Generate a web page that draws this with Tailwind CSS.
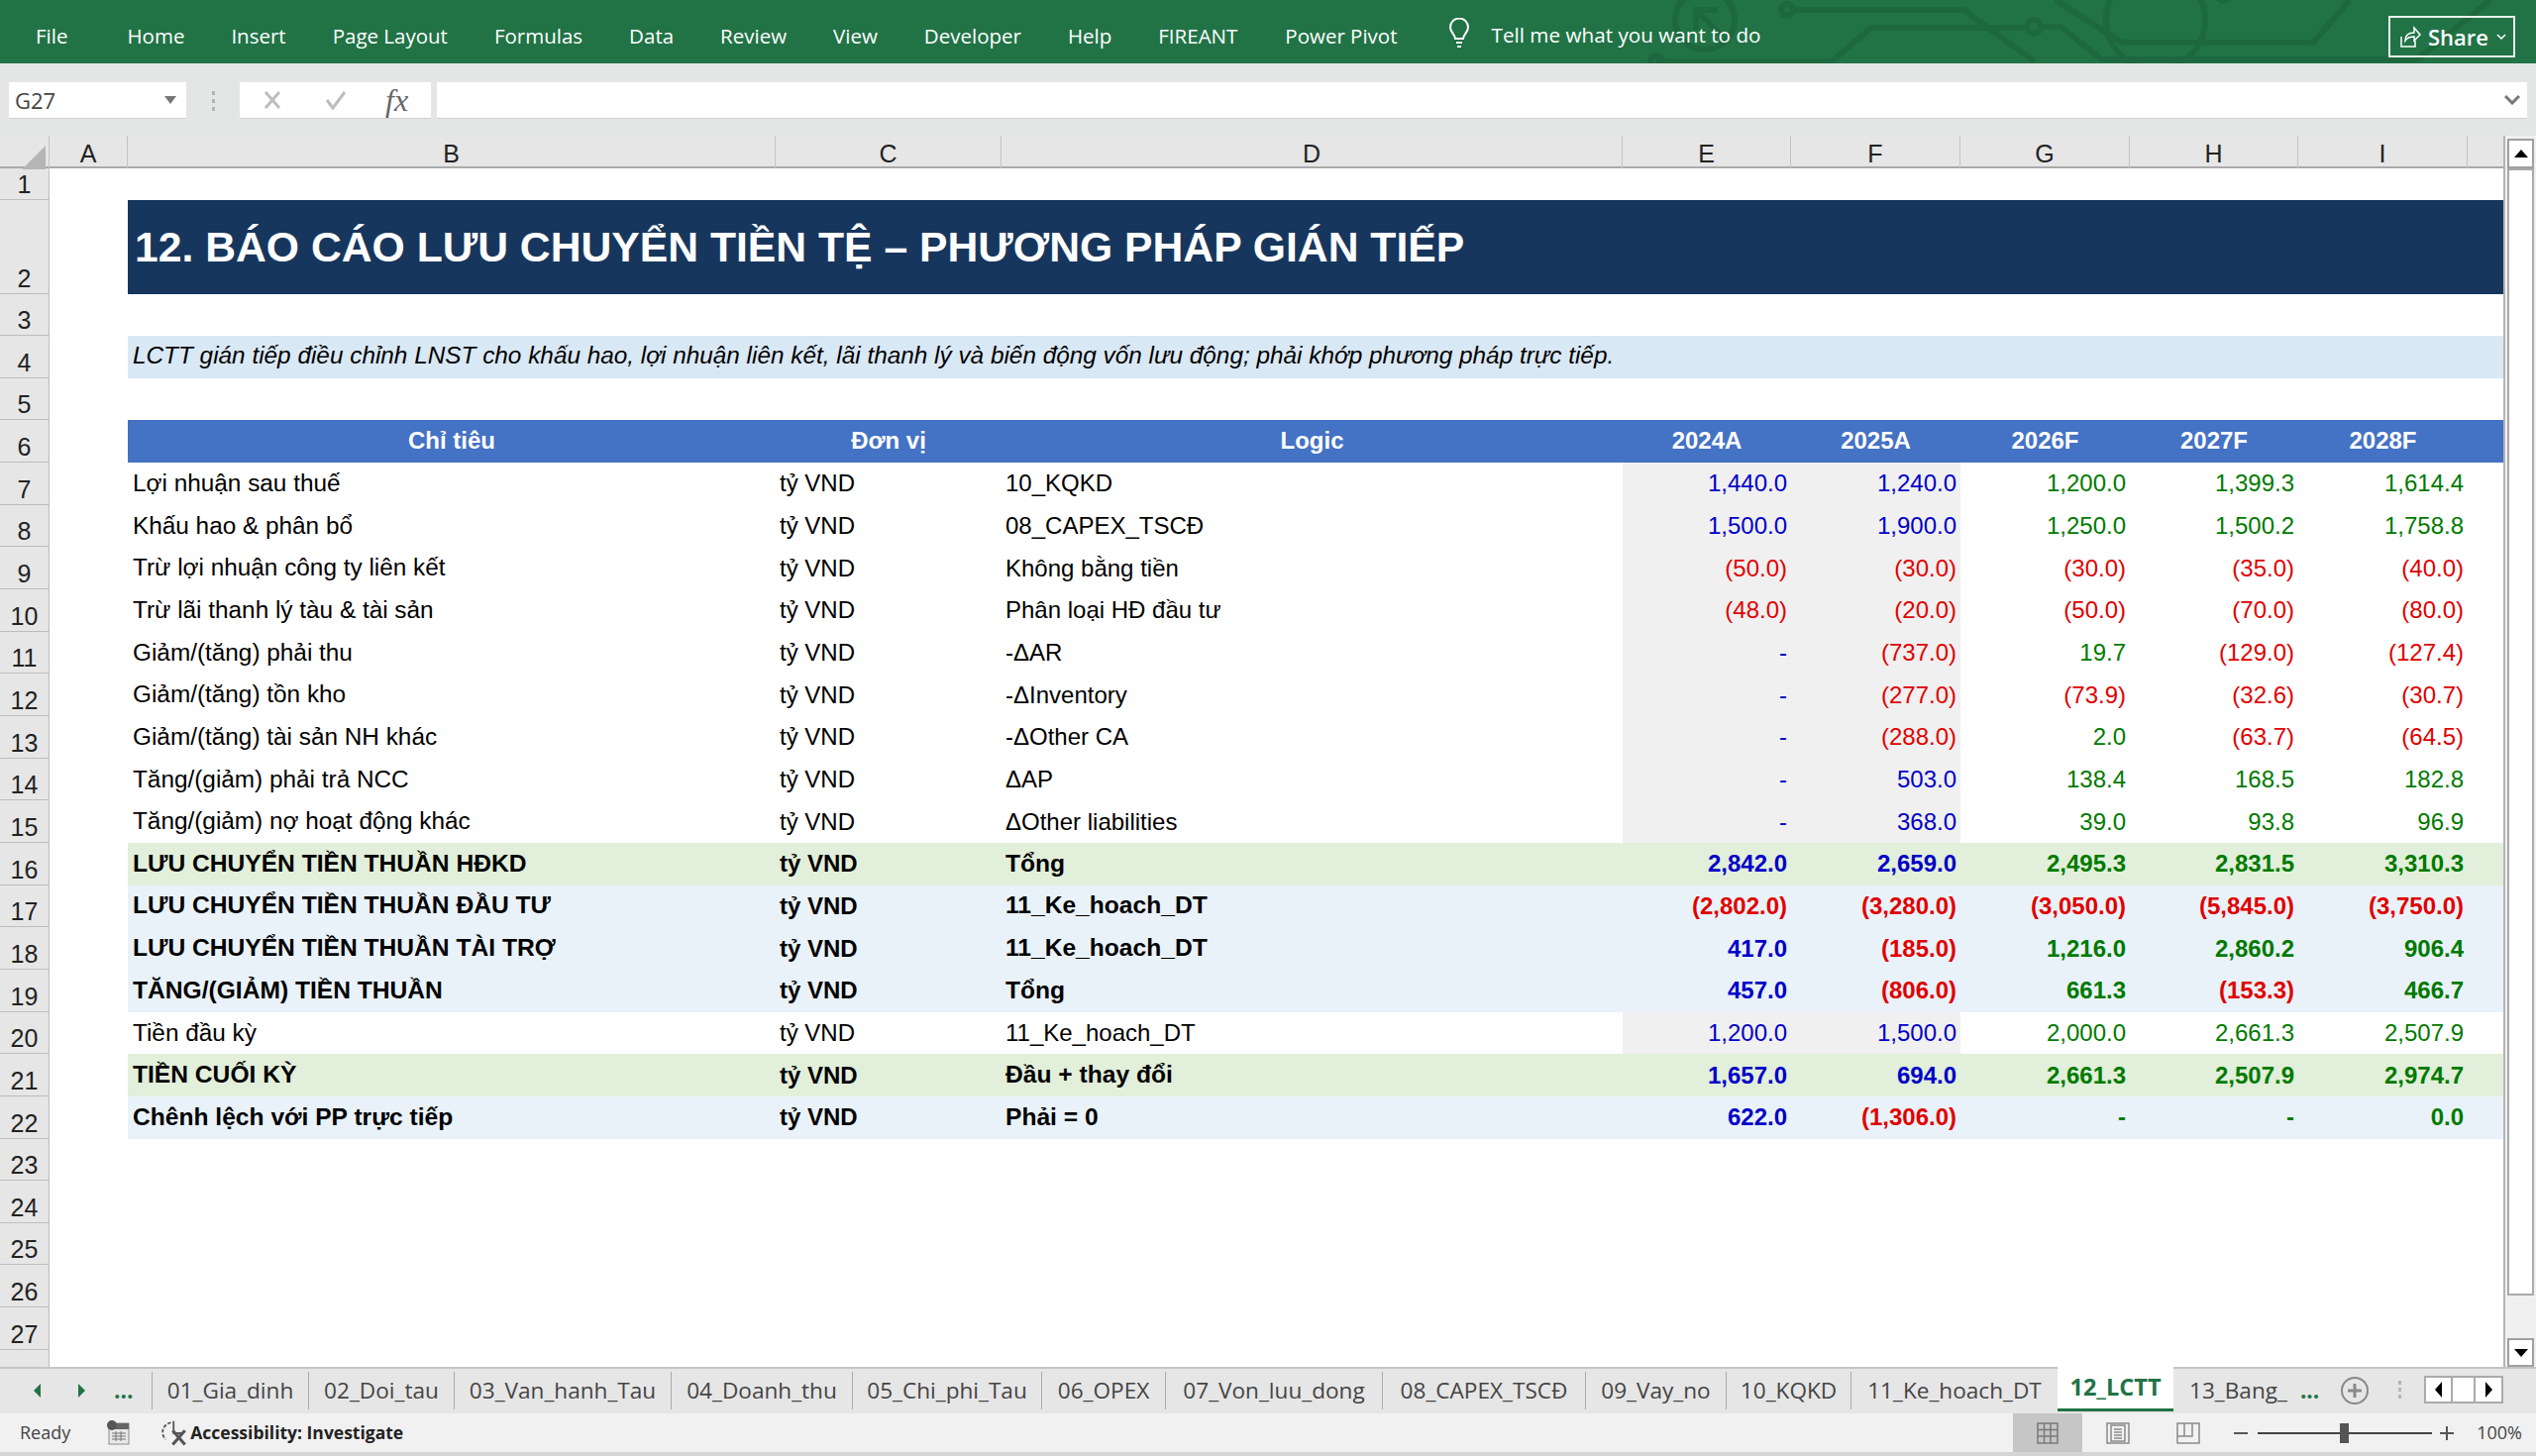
<!DOCTYPE html>
<html lang="vi">
<head>
  <meta charset="UTF-8" />
  <title>12_LCTT - Excel</title>
  <script src="https://cdn.jsdelivr.net/npm/@tailwindcss/browser@4"></script>
</head>
<body class="bg-[#e6e6e6] font-['Open_Sans',sans-serif]">
  <div class="w-[2560px] h-[1470px] overflow-hidden flex flex-col">

    <!-- ribbon tabs -->
    <div class="relative h-[64px] shrink-0 bg-[#217346] text-white text-[20.5px] flex items-center pt-[8px] pl-[36px]">
      <svg class="absolute left-0 top-0" width="2560" height="64" fill="none" stroke="#1e683f" stroke-width="6">
        <circle cx="1721" cy="20" r="30" />
        <path d="M1714 12 L1738 36 M1712 30 V10 H1734" />
        <circle cx="1804" cy="10" r="6" />
        <path d="M1810 10 H1982 L2054 62" />
        <path d="M1672 62 H1849 L1889 28 H2045" />
        <circle cx="1672" cy="62" r="6" />
        <circle cx="2053" cy="27" r="7" />
        <path d="M2060 27 H2080 L2122 60 H2440 L2514 0" />
        <path d="M2075 0 L2142 43 H2335 L2372 0" />
        <circle cx="2176" cy="20" r="50" />
        <circle cx="2244" cy="-4" r="8" fill="#1e683f" stroke="none" />
      </svg>
      <div class="relative flex items-center gap-[47px]">
        <span class="mr-[13px]">File</span>
        <span>Home</span>
        <span>Insert</span>
        <span>Page Layout</span>
        <span>Formulas</span>
        <span>Data</span>
        <span>Review</span>
        <span>View</span>
        <span>Developer</span>
        <span>Help</span>
        <span class="mr-[1px]">FIREANT</span>
        <span>Power Pivot</span>
      </div>
      <svg class="relative ml-[51px] -mt-[4px]" width="24" height="32" viewBox="0 0 24 32" fill="none" stroke="#fff" stroke-width="2">
        <path d="M8 21c0-4-5-6-5-11.500a9 9 0 0 1 18 0C21 15 16 17 16 21Z" />
        <path d="M9 25h6M10 29h4" />
      </svg>
      <span class="relative ml-[20px] text-[20.7px]">Tell me what you want to do</span>
      <div class="absolute left-[2411px] top-[16px] w-[128px] h-[42px] border-2 border-white/90 flex items-center pl-[9px] gap-[7px] text-[22px] font-semibold">
        <svg width="22" height="24" viewBox="0 0 22 24" fill="none" stroke="#fff" stroke-width="1.500">
          <path d="M2 12v10h14v-6" />
          <path d="M6 16c0-5 3-8 9-8V3l6 7-6 6v-4c-4 0-7 1-9 4Z" />
        </svg>
        <span>Share</span>
        <svg class="ml-[1px]" width="10" height="6" viewBox="0 0 10 6" fill="none" stroke="#fff" stroke-width="1.500"><path d="M1 1l4 4 4-4" /></svg>
      </div>
    </div>

    <!-- formula bar -->
    <div class="h-[73px] shrink-0 bg-[#e4e6e6] flex items-start pt-[19px] pl-[9px]">
      <div class="w-[179px] h-[37px] bg-white border-b border-[#d0d0d0] flex items-center justify-between pl-[6px] pr-[10px] text-[22px] text-[#444]">
        <span>G27</span>
        <span class="w-0 h-0 border-x-[6px] border-x-transparent border-t-[8px] border-t-[#777]"></span>
      </div>
      <div class="w-[54px] h-[37px] flex flex-col items-center justify-center gap-[4px]">
        <span class="w-[3px] h-[4px] bg-[#b5b5b5]"></span>
        <span class="w-[3px] h-[4px] bg-[#b5b5b5]"></span>
        <span class="w-[3px] h-[4px] bg-[#b5b5b5]"></span>
      </div>
      <div class="w-[193px] h-[37px] bg-white border-b border-[#d0d0d0] relative flex items-center">
        <svg class="ml-[23px]" width="20" height="20" viewBox="0 0 20 20" stroke="#bdbdbd" stroke-width="3" fill="none"><path d="M3 2l14 16M17 2L3 18" /></svg>
        <svg class="ml-[42px]" width="24" height="20" viewBox="0 0 24 20" stroke="#bdbdbd" stroke-width="3" fill="none"><path d="M3 10l6 8L21 2" /></svg>
        <span class="ml-[38px] text-[32px] italic font-['Liberation_Serif',serif] text-[#666] leading-none">fx</span>
      </div>
      <div class="ml-[6px] w-[2110px] h-[37px] bg-white border-b border-[#d0d0d0] flex items-center justify-end pr-[7px]">
        <svg width="16" height="10" viewBox="0 0 16 10" fill="none" stroke="#777" stroke-width="3"><path d="M1 1l7 7 7-7" /></svg>
      </div>
    </div>

    <!-- column letters + sheet -->
    <div class="flex h-[1243px] shrink-0">
      <div class="w-[2527px] flex flex-col font-['Liberation_Sans',sans-serif] text-[24px] text-black">
        <div class="h-[33px] shrink-0 grid grid-cols-[50px_79px_654px_228px_627px_170px_171px_171px_170px_171px_36px] bg-[#e6e6e6] border-b-2 border-[#a9a9a9] text-[25px] leading-[37px] text-center text-[#222]">
          <div class="relative border-r border-[#c4c4c4]">
            <span class="absolute right-[3px] bottom-[3px] w-0 h-0 border-l-[24px] border-l-transparent border-b-[24px] border-b-[#b5b5b5]"></span>
          </div>
          <div class="border-r border-[#c4c4c4]">A</div>
          <div class="border-r border-[#c4c4c4]">B</div>
          <div class="border-r border-[#c4c4c4]">C</div>
          <div class="border-r border-[#c4c4c4]">D</div>
          <div class="border-r border-[#c4c4c4]">E</div>
          <div class="border-r border-[#c4c4c4]">F</div>
          <div class="border-r border-[#c4c4c4]">G</div>
          <div class="border-r border-[#c4c4c4]">H</div>
          <div class="border-r border-[#c4c4c4]">I</div>
          <div></div>
        </div>
        <div id="sheet" class="flex-1 bg-white overflow-hidden"></div>
      </div>
      <!-- vertical scrollbar -->
      <div class="w-[33px] pl-[2px] pr-[2px] border-l-2 border-[#b5b5b5] bg-[#f0f0f0] flex flex-col">
        <div class="h-[30px] mt-[3px] bg-white border-2 border-[#9f9f9f] flex items-center justify-center">
          <span class="w-0 h-0 border-x-[7px] border-x-transparent border-b-[8px] border-b-black"></span>
        </div>
        <div class="h-[1138px] bg-white border-2 border-[#a9a9a9]"></div>
        <div class="flex-1"></div>
        <div class="h-[29px] bg-white border-2 border-[#9f9f9f] flex items-center justify-center">
          <span class="w-0 h-0 border-x-[7px] border-x-transparent border-t-[8px] border-t-black"></span>
        </div>
      </div>
    </div>

    <!-- sheet tabs -->
    <div class="h-[47px] shrink-0 border-t-2 border-[#c4c4c4] bg-[#e6e6e6] flex items-start text-[22.6px] text-[#444] relative">
      <div class="w-[153px] h-[38px] mt-[3px] flex items-center pl-[34px] text-[#217346]">
        <span class="w-0 h-0 border-y-[7px] border-y-transparent border-r-[7px] border-r-[#217346]"></span>
        <span class="ml-[38px] w-0 h-0 border-y-[7px] border-y-transparent border-l-[7px] border-l-[#217346]"></span>
        <span class="ml-[29px] font-bold">...</span>
      </div>
      <div class="w-[158px] h-[38px] mt-[3px] border-l border-[#ababab] flex items-center justify-center leading-none">01_Gia_dinh</div>
      <div class="w-[147px] h-[38px] mt-[3px] border-l border-[#ababab] flex items-center justify-center leading-none">02_Doi_tau</div>
      <div class="w-[219px] h-[38px] mt-[3px] border-l border-[#ababab] flex items-center justify-center leading-none">03_Van_hanh_Tau</div>
      <div class="w-[183px] h-[38px] mt-[3px] border-l border-[#ababab] flex items-center justify-center leading-none">04_Doanh_thu</div>
      <div class="w-[191px] h-[38px] mt-[3px] border-l border-[#ababab] flex items-center justify-center leading-none">05_Chi_phi_Tau</div>
      <div class="w-[125px] h-[38px] mt-[3px] border-l border-[#ababab] flex items-center justify-center leading-none">06_OPEX</div>
      <div class="w-[219px] h-[38px] mt-[3px] border-l border-[#ababab] flex items-center justify-center leading-none">07_Von_luu_dong</div>
      <div class="w-[205px] h-[38px] mt-[3px] border-l border-[#ababab] flex items-center justify-center leading-none">08_CAPEX_TSCĐ</div>
      <div class="w-[142px] h-[38px] mt-[3px] border-l border-[#ababab] flex items-center justify-center leading-none">09_Vay_no</div>
      <div class="w-[126px] h-[38px] mt-[3px] border-l border-[#ababab] flex items-center justify-center leading-none">10_KQKD</div>
      <div class="w-[209px] h-[38px] mt-[3px] border-l border-[#ababab] flex items-center justify-center leading-none">11_Ke_hoach_DT</div>
      <div class="w-[117px] h-[45px] -mt-[2px] bg-white border-b-[3px] border-[#217346] flex items-center justify-center font-bold text-[#217346] text-[23.5px] leading-none">12_LCTT</div>
      <div class="h-[38px] mt-[3px] pl-[16px] flex items-center leading-none">13_Bang_<span class="ml-[13px] font-bold text-[#217346]">...</span></div>
      <svg class="ml-[21px] mt-[7px]" width="30" height="30" viewBox="0 0 30 30" fill="none" stroke="#8a8a8a" stroke-width="2"><circle cx="15" cy="15" r="13" /><path d="M15 8v14M8 15h14" stroke-width="3" /></svg>
      <div class="ml-[29px] mt-[12px] flex flex-col gap-[3px]">
        <span class="w-[3px] h-[4px] bg-[#b5b5b5]"></span>
        <span class="w-[3px] h-[4px] bg-[#b5b5b5]"></span>
        <span class="w-[3px] h-[4px] bg-[#b5b5b5]"></span>
      </div>
      <div class="ml-[23px] mt-[7px] w-[80px] h-[28px] bg-white border-2 border-[#ababab] flex">
        <div class="w-[27px] border-r-2 border-[#ababab] flex items-center justify-center"><span class="w-0 h-0 border-y-[8px] border-y-transparent border-r-[7px] border-r-black"></span></div>
        <div class="w-[23px] border-r-2 border-[#ababab]"></div>
        <div class="flex-1 flex items-center justify-center"><span class="w-0 h-0 border-y-[8px] border-y-transparent border-l-[7px] border-l-black"></span></div>
      </div>
    </div>

    <!-- status bar -->
    <div class="h-[39px] shrink-0 bg-[#f1f1f1] flex items-center text-[18px] text-[#444]">
      <span class="ml-[20px]">Ready</span>
      <svg class="ml-[36px]" width="24" height="26" viewBox="0 0 24 26">
        <rect x="3" y="3" width="20" height="21" fill="#e8e8e8" stroke="#8c8c8c" />
        <rect x="3" y="3" width="20" height="6" fill="#666" />
        <circle cx="6" cy="5" r="5" fill="#555" />
        <path d="M6 13h14M6 16h14M6 19h14M10 11v10M15 11v10" stroke="#777" stroke-width="1" />
      </svg>
      <svg class="ml-[31px]" width="30" height="30" viewBox="0 0 34 30" fill="none" stroke="#555">
        <path d="M12 3a11 11 0 0 0 -6 19" stroke-dasharray="4 2" stroke-width="2" />
        <path d="M15 1v14h10" stroke-width="2" />
        <path d="M14 12l14 16M28 12L14 28" stroke-width="3.500" />
      </svg>
      <span class="font-bold text-[#222] text-[17.5px]">Accessibility: Investigate</span>

      <div class="ml-auto h-full w-[70px] bg-[#c6c6c6] flex items-center justify-center">
        <svg width="22" height="22" viewBox="0 0 22 22" fill="none" stroke="#7a7a7a" stroke-width="1.500"><rect x="1" y="1" width="20" height="20" /><path d="M1 7.500h20M1 14h20M7.500 1v20M14 1v20" /></svg>
      </div>
      <svg class="ml-[24px]" width="24" height="22" viewBox="0 0 24 22" fill="none" stroke="#8a8a8a" stroke-width="1.500"><rect x="1" y="1" width="22" height="20" /><rect x="5" y="3" width="14" height="16" /><path d="M8 7h8M8 10h8M8 13h8M8 16h8" /></svg>
      <svg class="ml-[47px]" width="24" height="22" viewBox="0 0 24 22" fill="none" stroke="#8a8a8a" stroke-width="1.500"><rect x="1" y="1" width="22" height="20" /><path d="M1 14h15V1M8 1v13" /></svg>
      <span class="ml-[34px] w-[14px] h-[2px] bg-[#555]"></span>
      <div class="relative ml-[10px] w-[176px] h-[2px] bg-[#444]">
        <span class="absolute left-[83px] top-[-9px] w-[9px] h-[20px] bg-[#555]"></span>
      </div>
      <span class="relative ml-[8px] w-[14px] h-[14px]">
        <span class="absolute left-0 top-[6px] w-[14px] h-[2px] bg-[#555]"></span>
        <span class="absolute left-[6px] top-0 w-[2px] h-[14px] bg-[#555]"></span>
      </span>
      <span class="ml-[23px] mr-[14px]">100%</span>
    </div>
    <div class="h-[4px] shrink-0 bg-[#d4d4d4]"></div>
  </div>

  <script>
    const GRID = 'grid grid-cols-[50px_79px_654px_228px_627px_170px_171px_171px_170px_171px_36px]';
    const C = {
      blue: 'text-[#0000c8]', green: 'text-[#007a00]', red: 'text-[#e00000]'
    };
    const RED = v => v.startsWith('(');

    const rows = [
      ['Lợi nhuận sau thuế', '10_KQKD', ['1,440.0', '1,240.0', '1,200.0', '1,399.3', '1,614.4']],
      ['Khấu hao & phân bổ', '08_CAPEX_TSCĐ', ['1,500.0', '1,900.0', '1,250.0', '1,500.2', '1,758.8']],
      ['Trừ lợi nhuận công ty liên kết', 'Không bằng tiền', ['(50.0)', '(30.0)', '(30.0)', '(35.0)', '(40.0)']],
      ['Trừ lãi thanh lý tàu & tài sản', 'Phân loại HĐ đầu tư', ['(48.0)', '(20.0)', '(50.0)', '(70.0)', '(80.0)']],
      ['Giảm/(tăng) phải thu', '-ΔAR', ['-', '(737.0)', '19.7', '(129.0)', '(127.4)']],
      ['Giảm/(tăng) tồn kho', '-ΔInventory', ['-', '(277.0)', '(73.9)', '(32.6)', '(30.7)']],
      ['Giảm/(tăng) tài sản NH khác', '-ΔOther CA', ['-', '(288.0)', '2.0', '(63.7)', '(64.5)']],
      ['Tăng/(giảm) phải trả NCC', 'ΔAP', ['-', '503.0', '138.4', '168.5', '182.8']],
      ['Tăng/(giảm) nợ hoạt động khác', 'ΔOther liabilities', ['-', '368.0', '39.0', '93.8', '96.9']],
      ['LƯU CHUYỂN TIỀN THUẦN HĐKD', 'Tổng', ['2,842.0', '2,659.0', '2,495.3', '2,831.5', '3,310.3'], 'bg-[#e2efda]'],
      ['LƯU CHUYỂN TIỀN THUẦN ĐẦU TƯ', '11_Ke_hoach_DT', ['(2,802.0)', '(3,280.0)', '(3,050.0)', '(5,845.0)', '(3,750.0)'], 'bg-[#e9f2f9]'],
      ['LƯU CHUYỂN TIỀN THUẦN TÀI TRỢ', '11_Ke_hoach_DT', ['417.0', '(185.0)', '1,216.0', '2,860.2', '906.4'], 'bg-[#e9f2f9]'],
      ['TĂNG/(GIẢM) TIỀN THUẦN', 'Tổng', ['457.0', '(806.0)', '661.3', '(153.3)', '466.7'], 'bg-[#e9f2f9]'],
      ['Tiền đầu kỳ', '11_Ke_hoach_DT', ['1,200.0', '1,500.0', '2,000.0', '2,661.3', '2,507.9']],
      ['TIỀN CUỐI KỲ', 'Đầu + thay đổi', ['1,657.0', '694.0', '2,661.3', '2,507.9', '2,974.7'], 'bg-[#e2efda]'],
      ['Chênh lệch với PP trực tiếp', 'Phải = 0', ['622.0', '(1,306.0)', '-', '-', '0.0'], 'bg-[#e9f2f9]']
    ];

    function rowHead(n) {
      return `<div class="bg-[#e6e6e6] border-r border-b border-[#bdbdbd] font-normal text-[25px] text-center text-[#222] flex items-end justify-center leading-[30px]">${n}</div>`;
    }

    function blankRow(n, h) {
      return `<div class="${GRID} ${h}">${rowHead(n)}</div>`;
    }

    function dataRow(n, r) {
      const [label, logic, vals, fill] = r;
      const bold = fill ? 'font-bold' : '';
      const labelSize = fill ? 'text-[24.6px]' : 'text-[24.35px]';
      const cells = vals.map((v, i) => {
        const color = RED(v) ? C.red : (i < 2 ? C.blue : C.green);
        const grey = !fill && i < 2 ? 'bg-[#f0f0f0]' : '';
        return `<div class="flex items-center justify-end pr-[4px] ${color} ${grey}">${v}</div>`;
      }).join('');
      return `<div class="${GRID} h-[42.67px] ${bold}">
        ${rowHead(n)}<div></div>
        <div class="col-span-9 grid grid-cols-subgrid ${fill || ''}">
          <div class="flex items-center pl-[5px] ${labelSize}">${label}</div>
          <div class="flex items-center pl-[4px]">tỷ VND</div>
          <div class="flex items-center pl-[4px] ${fill ? 'text-[24.6px]' : ''}">${logic}</div>
          ${cells}<div></div>
        </div>
      </div>`;
    }

    let html = blankRow(1, 'h-[32px]');
    html += `<div class="${GRID} h-[95px]">${rowHead(2)}<div></div>
      <div class="col-span-9 bg-[#17365d] text-white font-bold text-[42.7px] flex items-center pl-[7px]">12. BÁO CÁO LƯU CHUYỂN TIỀN TỆ – PHƯƠNG PHÁP GIÁN TIẾP</div></div>`;
    html += blankRow(3, 'h-[42px]');
    html += `<div class="${GRID} h-[43px]">${rowHead(4)}<div></div>
      <div class="col-span-9 bg-[#d9e8f5] italic text-[24.35px] flex items-center pl-[5px] pb-[2px]">LCTT gián tiếp điều chỉnh LNST cho khấu hao, lợi nhuận liên kết, lãi thanh lý và biến động vốn lưu động; phải khớp phương pháp trực tiếp.</div></div>`;
    html += blankRow(5, 'h-[42px]');
    html += `<div class="${GRID} h-[43px] font-bold text-white text-center">${rowHead(6)}<div></div>
      <div class="col-span-9 grid grid-cols-subgrid bg-[#4472c4] items-center pb-[2px]">
        <div>Chỉ tiêu</div><div>Đơn vị</div><div>Logic</div>
        <div>2024A</div><div>2025A</div><div>2026F</div><div>2027F</div><div>2028F</div><div></div>
      </div></div>`;
    rows.forEach((r, i) => { html += dataRow(i + 7, r); });
    for (let n = 23; n <= 27; n++) html += blankRow(n, 'h-[42.67px]');
    html += `<div class="${GRID} h-[20px]"><div class="bg-[#e6e6e6] border-r border-[#bdbdbd]"></div></div>`;
    document.getElementById('sheet').innerHTML = html;
  </script>
</body>
</html>
